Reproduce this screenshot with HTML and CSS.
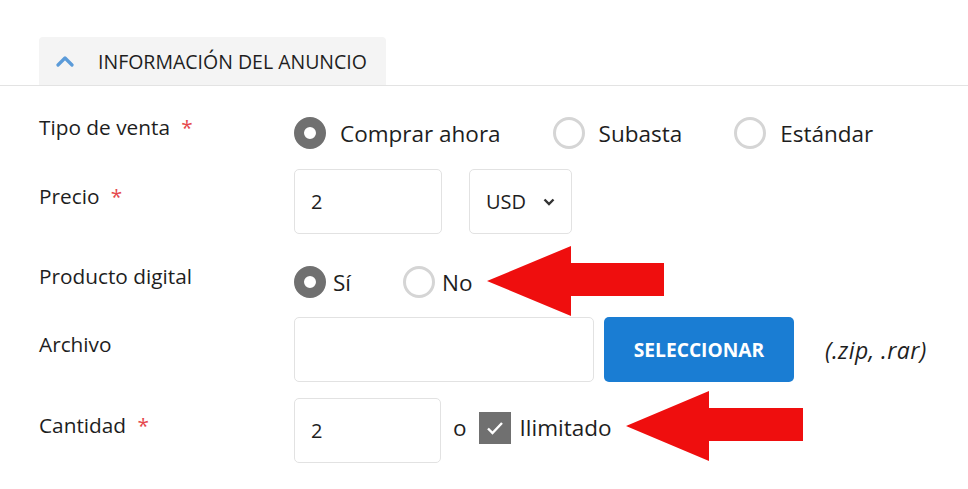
FILE: index.html
```html
<!DOCTYPE html>
<html lang="es">
<head>
  <meta charset="UTF-8">
  <title>Información del anuncio</title>
  <link rel="stylesheet" href="styles.css">
</head>
<body>
  <div class="page">
    <div class="tabs">
      <div class="tab">
        <svg class="tab-icon" width="18" height="12" viewBox="0 0 18 12">
          <path d="M2 10 L9 3 L16 10" fill="none" stroke="#5b9bd9" stroke-width="3.2" stroke-linecap="round" stroke-linejoin="round"/>
        </svg>
        <span>INFORMACIÓN DEL ANUNCIO</span>
      </div>
    </div>

    <div class="form">
      <div class="row row-type">
        <div class="label">Tipo de venta <span class="req">*</span></div>
        <div class="field">
          <label class="radio checked"><span class="dot"></span>Comprar ahora</label>
          <label class="radio"><span class="dot"></span>Subasta</label>
          <label class="radio"><span class="dot"></span>Estándar</label>
        </div>
      </div>

      <div class="row row-price">
        <div class="label">Precio <span class="req">*</span></div>
        <div class="field">
          <div class="input price-input">2</div>
          <div class="input select">USD
            <svg width="12" height="8" viewBox="0 0 12 8"><path d="M1.5 1.5 L6 6 L10.5 1.5" fill="none" stroke="#333" stroke-width="2.4"/></svg>
          </div>
        </div>
      </div>

      <div class="row row-digital">
        <div class="label">Producto digital</div>
        <div class="field">
          <label class="radio checked tight"><span class="dot"></span>Sí</label>
          <label class="radio tight"><span class="dot"></span>No</label>
        </div>
      </div>

      <div class="row row-file">
        <div class="label">Archivo</div>
        <div class="field">
          <div class="input file-input"></div>
          <button class="btn">SELECCIONAR</button>
          <span class="hint">(.zip, .rar)</span>
        </div>
      </div>

      <div class="row row-qty">
        <div class="label">Cantidad <span class="req">*</span></div>
        <div class="field">
          <div class="input qty-input">2</div>
          <div class="qty-extra">
            <span class="or">o</span>
            <label class="check"><span class="box">
              <svg width="18" height="14" viewBox="0 0 18 14"><path d="M2 7.5 L6.5 12 L16 2" fill="none" stroke="#fff" stroke-width="2.4"/></svg>
            </span>Ilimitado</label>
          </div>
        </div>
      </div>
    </div>

    <svg class="arrow arrow-1" width="180" height="72" viewBox="0 0 180 72">
      <polygon points="0,36 84,1 84,18 177,18 177,51 84,51 84,71" fill="#ef0e0e"/>
    </svg>
    <svg class="arrow arrow-2" width="180" height="72" viewBox="0 0 180 72">
      <polygon points="0,36 83,1 83,18 177,18 177,51 83,51 83,71" fill="#ef0e0e"/>
    </svg>
  </div>
</body>
</html>
```

FILE: styles.css
```css
body {
  margin: 0;
  font-family: 'Open Sans', sans-serif;
  color: #1e1e1e;
  background: #fff;
}

.page {
  position: relative;
  padding-top: 37px;
}

.tabs {
  display: flex;
  padding-left: 39px;
  border-bottom: 1px solid #e3e3e3;
}

.tab {
  display: flex;
  align-items: center;
  gap: 24px;
  width: 347px;
  height: 48px;
  box-sizing: border-box;
  padding-left: 17px;
  background: #f4f4f4;
  border-radius: 4px 4px 0 0;
  font-size: 19.5px;
}

.form {
  padding-left: 39px;
  padding-top: 24px;
}

.row {
  display: flex;
  align-items: center;
}

.label {
  width: 255px;
  flex-shrink: 0;
  font-size: 20.8px;
  padding-bottom: 12px;
}

.req {
  color: #e5484d;
  margin-left: 6px;
}

.field {
  display: flex;
  align-items: center;
}

.row-type { height: 46px; }
.row-price { margin-top: 13px; }
.row-digital { height: 46px; margin-top: 25px; }
.row-file { margin-top: 12px; }
.row-qty { margin-top: 16px; }

.radio {
  display: flex;
  align-items: center;
  gap: 14px;
  font-size: 22.5px;
  margin-right: 52px;
}

.radio.tight {
  gap: 7px;
}

.dot {
  width: 32px;
  height: 32px;
  box-sizing: border-box;
  border-radius: 50%;
  border: 3px solid #d5d5d5;
  background: #fff;
}

.radio.checked .dot {
  border: 10px solid #707070;
  background: #fff;
}

.input {
  display: flex;
  align-items: center;
  height: 65px;
  box-sizing: border-box;
  border: 1px solid #e2e2e2;
  border-radius: 5px;
  padding-left: 16px;
  font-size: 20px;
  background: #fff;
}

.price-input { width: 148px; }
.qty-input { width: 147px; }
.file-input { width: 300px; }

.select {
  width: 103px;
  margin-left: 27px;
  justify-content: space-between;
  padding-right: 16px;
}

.btn {
  width: 190px;
  height: 65px;
  margin-left: 10px;
  border: none;
  border-radius: 5px;
  background: #1a7dd3;
  color: #fff;
  font-family: 'Open Sans', sans-serif;
  font-weight: 700;
  font-size: 19.2px;
  cursor: pointer;
}

.hint {
  margin-left: 31px;
  font-style: italic;
  font-size: 23px;
  letter-spacing: 0.4px;
}

.qty-extra {
  display: flex;
  align-items: center;
  padding-bottom: 6px;
}

.or {
  font-size: 22.5px;
  margin-left: 12px;
  margin-right: 12px;
}

.check {
  display: flex;
  align-items: center;
  gap: 9px;
  font-size: 22.5px;
}

.box {
  width: 32px;
  height: 32px;
  background: #707070;
  display: flex;
  align-items: center;
  justify-content: center;
}

.arrow {
  position: absolute;
}

.arrow-1 { left: 487px; top: 245px; }
.arrow-2 { left: 626px; top: 390px; }
```
